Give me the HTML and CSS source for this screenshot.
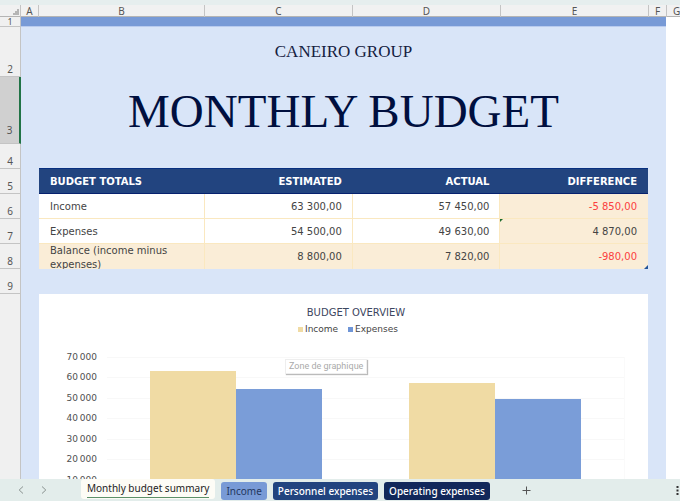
FILE: index.html
```html
<!doctype html>
<html lang="en">
<head>
    <meta charset="UTF-8">
    <meta name="viewport" content="width=device-width, initial-scale=1.0">
    <title>Monthly budget</title>
    <link rel="stylesheet" href="styles.css">
</head>
<body>
<div class="app">
    <div class="col-heads">
        <span class="corner"></span>
        <span>A</span>
        <span>B</span>
        <span>C</span>
        <span>D</span>
        <span>E</span>
        <span>F</span>
        <span>G</span>
    </div>
    <main class="workspace">
        <div class="row-heads">
            <span class="r1">1</span>
            <span class="r2">2</span>
            <span class="r3 selected">3</span>
            <span>4</span>
            <span>5</span>
            <span>6</span>
            <span>7</span>
            <span>8</span>
            <span>9</span>
        </div>
        <div class="sheet">
            <div class="stripe"></div>
            <p class="company">CANEIRO GROUP</p>
            <h1>MONTHLY BUDGET</h1>
            <table class="totals">
                <colgroup>
                    <col class="col-b">
                    <col class="col-c">
                    <col class="col-c">
                    <col class="col-c">
                </colgroup>
                <thead>
                <tr>
                    <th scope="col">BUDGET TOTALS</th>
                    <th scope="col">ESTIMATED</th>
                    <th scope="col">ACTUAL</th>
                    <th scope="col">DIFFERENCE</th>
                </tr>
                </thead>
                <tbody>
                <tr>
                    <td>Income</td>
                    <td>63 300,00</td>
                    <td>57 450,00</td>
                    <td class="tint neg">-5 850,00</td>
                </tr>
                <tr>
                    <td>Expenses</td>
                    <td>54 500,00</td>
                    <td>49 630,00</td>
                    <td class="tint flagged">4 870,00</td>
                </tr>
                <tr class="balance">
                    <td><div class="clip">Balance (income minus expenses)</div></td>
                    <td>8 800,00</td>
                    <td>7 820,00</td>
                    <td class="neg table-end">-980,00</td>
                </tr>
                </tbody>
            </table>
            <section class="chart">
                <h2>BUDGET OVERVIEW</h2>
                <div class="legend">
                    <span class="key income">Income</span>
                    <span class="key expenses">Expenses</span>
                </div>
                <div class="chart-body">
                    <div class="axis">
                        <span>70&#8201;000</span>
                        <span>60&#8201;000</span>
                        <span>50&#8201;000</span>
                        <span>40&#8201;000</span>
                        <span>30&#8201;000</span>
                        <span>20&#8201;000</span>
                        <span>10&#8201;000</span>
                    </div>
                    <div class="plot">
                        <div class="group">
                            <div class="bar income" style="height: 90.43%"></div>
                            <div class="bar expenses" style="height: 77.86%"></div>
                        </div>
                        <div class="group">
                            <div class="bar income" style="height: 82.07%"></div>
                            <div class="bar expenses" style="height: 70.9%"></div>
                        </div>
                    </div>
                </div>
                <div class="tip" role="tooltip">Zone de graphique</div>
            </section>
        </div>
        <div class="empty-col"></div>
    </main>
    <nav class="tabs">
        <button class="icon prev" aria-label="Previous sheet">
            <svg width="6" height="8" viewBox="0 0 6 8"><path d="M5 0.5L1.2 4L5 7.5"/></svg>
        </button>
        <button class="icon next" aria-label="Next sheet">
            <svg width="6" height="8" viewBox="0 0 6 8"><path d="M1 0.5L4.8 4L1 7.5"/></svg>
        </button>
        <button class="tab active"><span>Monthly budget summary</span></button>
        <button class="tab light">Income</button>
        <button class="tab mid">Personnel expenses</button>
        <button class="tab dark">Operating expenses</button>
        <button class="icon add" aria-label="New sheet">
            <svg width="9" height="9" viewBox="0 0 9 9"><path d="M4.5 0.5V8.5M0.5 4.5H8.5"/></svg>
        </button>
        <button class="icon more" aria-label="More">
            <svg width="3" height="9" viewBox="0 0 3 9"><path d="M0.5 0H2.5V2H0.5ZM0.5 3.5H2.5V5.5H0.5ZM0.5 7H2.5V9H0.5Z"/></svg>
        </button>
    </nav>
</div>
</body>
</html>
```

FILE: styles.css
```css
* {margin: 0; padding: 0; box-sizing: border-box}
body {
    font-family: "DejaVu Sans", Verdana, sans-serif;
    font-size: 10px;
    color: #444;
    background: #fff;
}
button {border: 0; background: none; font: inherit; color: inherit}
.app {display: flex; flex-direction: column; height: 100vh; overflow: hidden}

/* column letters */
.col-heads {
    display: grid;
    grid-template-columns: 21px 18px 166fr 148fr 148fr 148fr 18px 13px;
    height: 17px;
    flex: none;
    border-top: 5px solid #e6eeee;
    border-bottom: 1px solid #b4b4b4;
    background: #f1f1f1;
    font: 10px/12px "Noto Sans", sans-serif;
    text-align: center;
    color: #555;
}
.col-heads span {border-right: 1px solid #c4c4c4}
.col-heads span:last-child {border-right: 0; padding-left: 6px}
.col-heads .corner {
    background: linear-gradient(135deg, transparent 50%, #b5b5b5 50%) 12px 3px / 7px 7px no-repeat;
}

.workspace {display: flex; flex: 1; min-height: 0; overflow: hidden}

/* row numbers */
.row-heads {
    width: 21px;
    flex: none;
    background: #f0f0f0;
    border-right: 1px solid #c4c4c4;
    font: 10px/13px "Noto Sans", sans-serif;
    color: #555;
}
.row-heads span {
    display: flex;
    align-items: flex-end;
    justify-content: center;
    height: 25px;
    border-bottom: 1px solid #c4c4c4;
}
.row-heads .r1 {height: 10px; font-size: 9px; line-height: 9px}
.row-heads .r2 {height: 50px}
.row-heads .r3 {height: 67px; padding-bottom: 6px}
.row-heads .selected {background: #d0d0d0; margin-right: -1px; border-right: 2px solid #217346}

.sheet {flex: 1; min-width: 0; background: #d9e5f8}
.empty-col {width: 14px; flex: none; background: #fff}
.stripe {height: 10px; background: #789ad6; border-bottom: 1px solid #b9cbee}
.company {
    height: 49px;
    font: 17px/49px "Liberation Serif", serif;
    text-align: center;
    color: #14203f;
}
h1 {
    height: 92px;
    font: 47px/70px "Liberation Serif", serif;
    text-align: center;
    color: #000f3f;
}

/* totals */
.totals {
    width: calc(100% - 36px);
    margin: 0 18px;
    table-layout: fixed;
    border-collapse: separate;
    border-spacing: 0;
    background: #fff;
}
.col-b {width: 27.3%}
.totals th {
    height: 26px;
    padding: 0 11px;
    background: #22447f;
    border-top: 1px solid #083080;
    border-bottom: 1px solid #06216e;
    color: #fff;
    text-align: right;
}
.totals td {
    height: 25px;
    padding: 0 10px;
    text-align: right;
    border-right: 1px solid #fae8c0;
    border-bottom: 1px solid #fae8c0;
}
.totals th:first-child, .totals td:first-child {text-align: left; padding-left: 11px}
.totals td:last-child {border-right: 0; padding-right: 11px}
.totals .tint, .totals .balance td {background: #faedd7}
.totals .balance td {border-bottom: 0}
.totals .neg {color: #fb4040}
.clip {height: 25px; line-height: 14px; overflow: hidden}
.flagged, .table-end {position: relative}
.flagged::before {
    content: "";
    position: absolute;
    top: 0;
    left: 0;
    border-top: 3px solid #1c6b2c;
    border-right: 3px solid transparent;
}
.table-end::after {
    content: "";
    position: absolute;
    right: 0;
    bottom: 0;
    border-bottom: 4px solid #22549a;
    border-left: 4px solid transparent;
}

/* chart */
.chart {
    position: relative;
    margin: 25px 18px 0;
    padding: 12px 23px 30px 24px;
    background: #fff;
}
.chart h2 {
    padding-left: 24px;
    font-size: 10px;
    font-weight: normal;
    line-height: 14px;
    text-align: center;
    color: #3c4660;
}
.legend {
    display: flex;
    justify-content: center;
    gap: 10px;
    padding-left: 8px;
    margin-top: 3px;
    font-size: 9px;
    line-height: 12px;
}
.key {display: flex; align-items: center; gap: 2px}
.key::before {content: ""; width: 5px; height: 5px; background: #f0dba4}
.key.expenses::before {background: #6f95d6}
.chart-body {display: flex; gap: 10px; margin-top: 22px}
.axis {
    display: flex;
    flex-direction: column;
    width: 34px;
    height: 143px;
    margin-top: -6px;
    font: 9px/12px "DejaVu Sans", Verdana, sans-serif;
    text-align: right;
    color: #505050;
}
.axis span {flex: 1}
.plot {
    display: flex;
    flex: 1;
    height: 143px;
    background: repeating-linear-gradient(#f8f8f8 0 1px, transparent 1px calc(100% / 7));
    border-right: 1px solid #fafafa;
}
.group {display: flex; flex: 1; align-items: flex-end; justify-content: center}
.bar {width: 33.33%}
.bar.income {background: #f0dba4}
.bar.expenses {background: #7a9dd8}
.tip {
    position: absolute;
    top: 65px;
    left: 246px;
    padding: 0 3px;
    border: 1px solid #eee;
    background: #fff;
    box-shadow: 1px 1px 1px #bbb;
    font: 9px/13px Roboto, sans-serif;
    color: #aaa;
}

/* sheet tabs */
.tabs {
    display: flex;
    align-items: flex-start;
    gap: 6px;
    flex: none;
    height: 22px;
    padding: 0 0 0 16px;
    background: #e3edeb;
    font: 10px/17px "Noto Sans", sans-serif;
}
.tab {height: 18px; margin-top: 3px; padding: 0 5px; border-radius: 3px; color: #fff; white-space: nowrap}
.tab.active {height: 20px; margin: 0 0 0 27px; padding: 0 6px; background: #fdfcf6; color: #222}
.tab.active span {display: block; height: 18px; border-bottom: 1px solid #5c9068}
.tab.light {background: #789ad6; color: #24375e}
.tab.mid {background: #22447f}
.tab.dark {background: #12285a}
.tab.mid, .tab.dark {font-weight: 500}
.icon {display: flex; align-items: center; justify-content: center; height: 22px; width: 9px; flex: none}
.icon.next {margin-left: 8px}
.icon.add {margin-left: 26px}
.icon.more {margin-left: auto; margin-right: -2px}
.icon svg {fill: none; stroke: #8a9290}
.icon.add svg {stroke: #555}
.icon.more svg {fill: #333; stroke: none}
```
